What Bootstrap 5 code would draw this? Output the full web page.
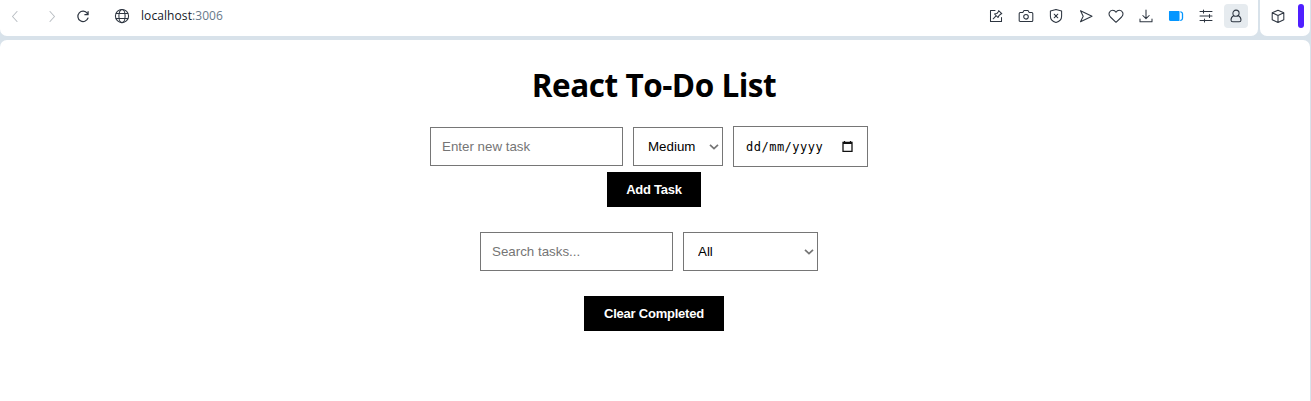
<!DOCTYPE html>
<html lang="en">
<head>
<meta charset="utf-8">
<title>React To-Do List</title>
<link href="https://cdn.jsdelivr.net/npm/bootstrap@5.3.0/dist/css/bootstrap.min.css" rel="stylesheet">
<style>
body{background:#d8e2ea;height:401px;overflow:hidden;color:#000;font-family:"Liberation Sans",sans-serif;font-size:13.333px}
.chrome{height:36px;gap:2px;padding-right:1px}
.bar{background:#fff;border-radius:0 0 7px 7px;height:36px;padding-bottom:4px}
.bar svg,.side svg{display:block;fill:none;stroke:#2d3540;stroke-width:1.05;stroke-linejoin:round;stroke-linecap:round}
.side{background:#fff;border-radius:0 0 7px 7px;width:50px;padding:0 6px 4px 10px}
.accent{width:6px;height:24px;border-radius:3px;background:#4f1fff}
.addr{font-family:"Open Sans",sans-serif;font-size:12px;letter-spacing:.08px;color:#15191f;line-height:16px;margin-left:11px;white-space:nowrap}
.port{color:#68798a}
.tools{gap:14px;padding-right:14px}
.user{width:24px;height:24px;border-radius:4px;background:#e6ebef;margin:0 -4px}
.page{background:#fff;margin:4px 1px 0 0;height:361px;border-radius:7px 7px 0 0;padding:25px 2px 0 0}
h1{font-family:"Open Sans",sans-serif;font-weight:700;font-size:31.5px;line-height:40px;margin:0 0 21px;letter-spacing:-.48px}
.line{gap:10px}
.field{border:1px solid #767676;border-radius:0;height:39px;font-size:13.333px;padding:0 11px;color:#000;line-height:37px}
.field::placeholder{color:#757575;opacity:1}
.entry{width:193px}
.pick{padding:0 14px;background:#fff url("data:image/svg+xml,%3Csvg xmlns='http://www.w3.org/2000/svg' viewBox='0 0 10 6'%3E%3Cpath d='M1 .8 5 4.6 9 .8' fill='none' stroke='%23757575' stroke-width='1.7'/%3E%3C/svg%3E") no-repeat right 3px center/10px 6px}
.date{width:135px;height:41px;line-height:40px;font-family:"DejaVu Sans Mono",monospace;font-size:12px;letter-spacing:.5px;padding:0 13px 0 12px}
.action{background:#000;color:#fff;border:0;border-radius:0;font-size:13px;letter-spacing:-.23px;font-weight:700;height:35px;padding:0;line-height:35px}
</style>
<script src="https://cdn.jsdelivr.net/npm/bootstrap@5.3.0/dist/js/bootstrap.bundle.min.js"></script>
</head>
<body>
<header class="chrome d-flex">
  <nav class="bar flex-grow-1 d-flex align-items-center">
    <svg width="16" height="16" viewBox="0 0 16 16" style="margin-left:7px;stroke:#b9bec3"><path d="M10 3.500 5.500 8.500l4.500 5"/></svg>
    <svg width="16" height="16" viewBox="0 0 16 16" style="margin-left:21px;stroke:#b9bec3"><path d="m6 3.500 4.500 5-4.500 5"/></svg>
    <svg width="16" height="16" viewBox="0 0 16 16" style="margin-left:15px;stroke-width:1.2"><path d="M12.3 5.300A5.200 5.200 0 1 0 13 10M13.100 3.500v3.200H9.900"/></svg>
    <svg width="16" height="16" viewBox="0 0 16 16" style="margin-left:23px"><circle cx="8" cy="8" r="6.6"/><ellipse cx="8" cy="8" rx="3.1" ry="6.6"/><path d="M2.2 5.5h11.6M2.2 10.5h11.6"/></svg>
    <span class="addr">localhost<span class="port">:3006</span></span>
    <div class="tools d-flex align-items-center ms-auto">
      <svg width="16" height="16" viewBox="0 0 16 16"><path d="M7 2.5H2.500v11h11V9.500M5.200 10.800l2.600-2.600M6.500 6l3.500 3.500M6.500 6l2.300-.4L11 3l2.500 2.500-2.600 2.200-.9 1.800M10.600 2.500l3.200 3.200"/></svg>
      <svg width="16" height="16" viewBox="0 0 16 16"><path d="M2.2 4.500h2.600L6 2.500h4l1.200 2h2.600q1 0 1 1v7q0 1-1 1H2.200q-1 0-1-1v-7q0-1 1-1Z"/><circle cx="8" cy="8.8" r="2.3"/></svg>
      <svg width="16" height="16" viewBox="0 0 16 16"><path d="M8 1.600 13.600 3v5.200c0 3.100-2.300 5.300-5.600 6.300-3.300-1-5.600-3.200-5.600-6.300V3ZM6.200 6.200l3.600 3.600M9.800 6.200 6.200 9.800"/></svg>
      <svg width="16" height="16" viewBox="0 0 16 16"><path d="m2.500 2.700 11.500 5.500-11.500 5.500L5.200 8.200Z"/></svg>
      <svg width="16" height="16" viewBox="0 0 16 16"><path d="M8 14.300 2.400 9C-.4 6 1.600 2.300 4.600 2.300 6.200 2.300 7.400 3.200 8 4.300c.6-1.100 1.800-2 3.400-2 3 0 5 3.700 2.200 6.700Z"/></svg>
      <svg width="16" height="16" viewBox="0 0 16 16"><path d="M8 2v8.500M4.800 7.500 8 10.700l3.200-3.200M2 11v2.700h12V11"/></svg>
      <svg width="16" height="16" viewBox="0 0 16 16"><path d="M1.500 3.500h9.500v9H2.500q-1 0-1-1Z" fill="#0496ff" stroke="#0496ff"/><path d="M12.800 3.800q1.700.4 1.700 2v4.500q0 1.600-1.700 2" stroke="#0496ff" stroke-width="1.300"/></svg>
      <svg width="16" height="16" viewBox="0 0 16 16"><path d="M2 3.500h12M2 8h12M2 12.500h12M5.500 2v3M11.500 6.500v3M6.500 11v3"/></svg>
      <div class="user d-flex align-items-center justify-content-center"><svg width="16" height="16" viewBox="0 0 16 16"><circle cx="8" cy="5.200" r="3.100"/><path d="M5.800 7.500C3.800 8.500 3 10 3 12q0 1.800 1.800 1.800h6.400Q13 13.800 13 12c0-2-.8-3.500-2.800-4.500"/></svg></div>
    </div>
  </nav>
  <div class="side d-flex align-items-center justify-content-between">
    <svg width="16" height="16" viewBox="0 0 16 16"><path d="m8 2.300 5.800 2.500v6.900L8 14.500l-5.800-2.800V4.800ZM2.200 4.800 8 7.500l5.800-2.700M8 7.500v7"/></svg>
    <span class="accent"></span>
  </div>
</header>
<main class="page d-flex flex-column align-items-center">
  <h1>React To-Do List</h1>
  <div class="line d-flex align-items-center" style="margin-right:10px">
    <input class="form-control field entry" placeholder="Enter new task">
    <select class="form-select field pick" style="width:90px"><option>Medium</option></select>
    <div class="field date flex-shrink-0 d-flex align-items-center justify-content-between"><span>dd/mm/yyyy</span><svg width="13" height="13" viewBox="0 0 13 13"><path d="M2 2.500h9v8.800H2ZM2 3.300h9M3.500 1v2M9.500 1v2" fill="none" stroke="#111" stroke-width="1.300"/></svg></div>
  </div>
  <button class="btn action" style="width:94px;margin-top:5px">Add Task</button>
  <div class="line d-flex" style="margin:25px 10px 25px 0">
    <input class="form-control field entry" placeholder="Search tasks...">
    <select class="form-select field pick" style="width:135px"><option>All</option></select>
  </div>
  <button class="btn action" style="width:140px">Clear Completed</button>
</main>
</body>
</html>
